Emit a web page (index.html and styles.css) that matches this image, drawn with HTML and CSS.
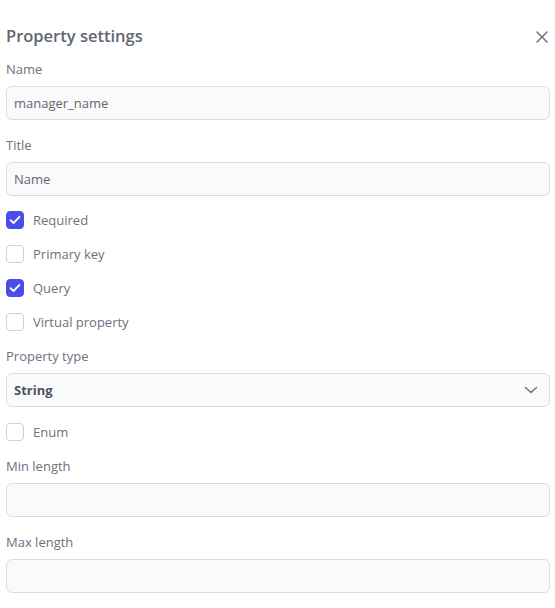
FILE: index.html
```html
<!DOCTYPE html>
<html>
<head>
<meta charset="utf-8">
<link rel="stylesheet" href="styles.css">
</head>
<body>
<div class="panel">
  <div class="header">
    <h2 class="title">Property settings</h2>
    <button class="close" aria-label="Close">
      <svg width="14" height="14" viewBox="0 0 14 14"><path d="M2 2L12 12M12 2L2 12" stroke="#6b7280" stroke-width="1.5" stroke-linecap="round"/></svg>
    </button>
  </div>
  <div class="field">
    <label class="label">Name</label>
    <div class="input">manager_name</div>
  </div>
  <div class="field">
    <label class="label">Title</label>
    <div class="input">Name</div>
  </div>
  <div class="checks">
    <div class="check"><span class="box on"><svg width="12" height="10" viewBox="0 0 12 10"><path d="M1.5 5.2L4.5 8L10.5 1.8" stroke="#fff" stroke-width="1.8" fill="none" stroke-linecap="round" stroke-linejoin="round"/></svg></span>Required</div>
    <div class="check"><span class="box"></span>Primary key</div>
    <div class="check"><span class="box on"><svg width="12" height="10" viewBox="0 0 12 10"><path d="M1.5 5.2L4.5 8L10.5 1.8" stroke="#fff" stroke-width="1.8" fill="none" stroke-linecap="round" stroke-linejoin="round"/></svg></span>Query</div>
    <div class="check"><span class="box"></span>Virtual property</div>
  </div>
  <div class="field">
    <label class="label">Property type</label>
    <div class="input select"><span class="strong">String</span>
      <svg width="14" height="8" viewBox="0 0 14 8"><path d="M1.5 1.5L7 6.5L12.5 1.5" stroke="#6b7280" stroke-width="1.5" fill="none" stroke-linecap="round" stroke-linejoin="round"/></svg>
    </div>
  </div>
  <div class="checks enum">
    <div class="check"><span class="box"></span>Enum</div>
  </div>
  <div class="field">
    <label class="label">Min length</label>
    <div class="input"></div>
  </div>
  <div class="field">
    <label class="label">Max length</label>
    <div class="input"></div>
  </div>
</div>
</body>
</html>
```
FILE: styles.css
```css
* { box-sizing: border-box; }
body {
  margin: 0;
  background: #fff;
  font-family: "Open Sans", "Liberation Sans", sans-serif;
  font-size: 13px;
  color: #6b7280;
}
.panel {
  padding: 23px 6px 0 6px;
  display: flex;
  flex-direction: column;
  gap: 15px;
}
.header {
  display: flex;
  justify-content: space-between;
  align-items: center;
  height: 24px;
  margin-bottom: -3px;
}
.title {
  margin: 0;
  font-size: 16.5px;
  font-weight: 600;
  color: #5f6673;
}
.close {
  border: 0;
  background: none;
  padding: 0;
  display: flex;
  width: 14px;
  height: 14px;
  margin-top: 4px;
}
.field {
  display: flex;
  flex-direction: column;
  gap: 7px;
}
.label {
  line-height: 20px;
  color: #6b7280;
}
.input {
  height: 34px;
  border: 1px solid #dcdcdc;
  border-radius: 6px;
  background: #fafafa;
  padding: 0 7px;
  display: flex;
  align-items: center;
  color: #5f6673;
  width: 544px;
}
.select {
  justify-content: space-between;
  padding-right: 11px;
}
.strong { font-weight: 700; color: #4b5260; }
.checks {
  display: flex;
  flex-direction: column;
  gap: 16px;
}
.checks.enum {
  padding-top: 1px;
}
.check {
  display: flex;
  align-items: center;
  gap: 9px;
  height: 18px;
  color: #6b7280;
}
.box {
  width: 18px;
  height: 18px;
  border: 1.5px solid #cfd1d6;
  border-radius: 4px;
  background: #fff;
  display: flex;
  align-items: center;
  justify-content: center;
}
.box.on {
  background: #4a4ee8;
  border-color: #4a4ee8;
}
```
